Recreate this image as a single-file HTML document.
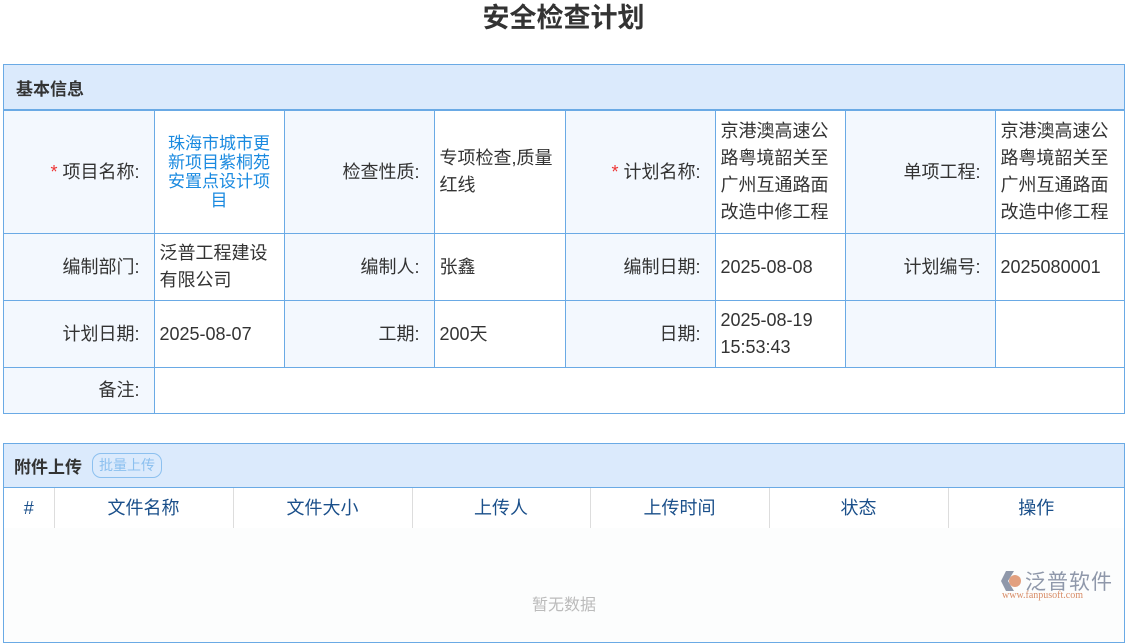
<!DOCTYPE html>
<html><head><meta charset="utf-8"><style>
*{box-sizing:border-box;margin:0;padding:0}
body{width:1127px;height:614px;overflow:hidden;background:#fff;font-family:"Liberation Sans","Noto Sans CJK SC",sans-serif;color:#333;position:relative}
h1{position:absolute;top:0;left:0;width:1127px;text-align:center;font-size:27px;line-height:36px;font-weight:bold;color:#333}
.box{position:absolute;left:3px;width:1122px;border:1px solid #6aaae5}
.hd{background:#dbeafc;font-weight:bold;font-size:17px;color:#333;padding-left:12px;display:flex;align-items:center}
table{border-collapse:collapse;table-layout:fixed;width:1120px}
td{border:1px solid #6aaae5;font-size:18px;line-height:27px;vertical-align:middle}
td.l{background:#f3f8fe;text-align:right;padding-right:14px}
td.v{background:#fff;padding-left:5px;padding-right:12px}
tr td:first-child{border-left:none}
tr td:last-child{border-right:none}
tr:last-child td{border-bottom:none}
.r{color:#e33}
td.ln{color:#1a8ae0;text-align:center;line-height:19px;padding:0 10px;font-size:17px}
.btn{display:inline-block;margin-left:10px;border:1px solid #8cc0ef;border-radius:9px;color:#8cc0ef;font-size:14px;font-weight:normal;height:25px;line-height:23px;padding:0 6px}
.t2 td{border:1px solid #ddd;color:#1a4f8a;text-align:center;height:40px}
</style></head><body>
<h1>安全检查计划</h1>
<div class="box" style="top:64px">
<div class="hd" style="height:45px;border-bottom:1px solid #6aaae5">基本信息</div>
<table>
<colgroup><col style="width:150px"><col style="width:130px"><col style="width:150px"><col style="width:131px"><col style="width:150px"><col style="width:130px"><col style="width:150px"><col style="width:129px"></colgroup>
<tr style="height:123px"><td class="l"><span class="r">*</span> 项目名称:</td><td class="v ln">珠海市城市更新项目紫桐苑安置点设计项目</td><td class="l">检查性质:</td><td class="v">专项检查,质量红线</td><td class="l"><span class="r">*</span> 计划名称:</td><td class="v">京港澳高速公路粤境韶关至广州互通路面改造中修工程</td><td class="l">单项工程:</td><td class="v">京港澳高速公路粤境韶关至广州互通路面改造中修工程</td></tr>
<tr style="height:67px"><td class="l">编制部门:</td><td class="v">泛普工程建设有限公司</td><td class="l">编制人:</td><td class="v">张鑫</td><td class="l">编制日期:</td><td class="v">2025-08-08</td><td class="l">计划编号:</td><td class="v">2025080001</td></tr>
<tr style="height:67px"><td class="l">计划日期:</td><td class="v">2025-08-07</td><td class="l">工期:</td><td class="v">200天</td><td class="l">日期:</td><td class="v">2025-08-19 15:53:43</td><td class="l"></td><td class="v"></td></tr>
<tr style="height:45px"><td class="l">备注:</td><td class="v" colspan="7"></td></tr>
</table>
</div>
<div class="box" style="top:443px;height:200px;background:#fcfdfd">
<div class="hd" style="height:44px;border-bottom:1px solid #6aaae5;padding-left:10px">附件上传<span class="btn">批量上传</span></div>
<table class="t2" style="background:#fff">
<colgroup><col style="width:50px"><col style="width:179px"><col style="width:179px"><col style="width:178px"><col style="width:179px"><col style="width:179px"><col style="width:176px"></colgroup>
<tr><td style="border-top:none;border-left:none">#</td><td style="border-top:none">文件名称</td><td style="border-top:none">文件大小</td><td style="border-top:none">上传人</td><td style="border-top:none">上传时间</td><td style="border-top:none">状态</td><td style="border-top:none;border-right:none">操作</td></tr>
</table>
<div style="position:absolute;top:147px;left:0;width:1120px;text-align:center;color:#bbb;font-size:16px">暂无数据</div>
<div style="position:absolute;left:996px;top:124px;width:120px">
<svg width="22" height="22" viewBox="0 0 22 22" style="position:absolute;left:0;top:2px"><path d="M6 1 L14 1 L8 11 L14 21 L6 21 L1 11 Z" fill="#8f98aa"/><circle cx="15" cy="11" r="6" fill="#e2a07f"/></svg>
<span style="position:absolute;left:25px;top:-2px;font-size:21px;color:#8f98aa;letter-spacing:1px">泛普软件</span>
<span style="position:absolute;left:2px;top:22px;font-size:10px;color:#d88c66;font-family:'Liberation Serif',serif">www.fanpusoft.com</span>
</div>
</div>
</body></html>
